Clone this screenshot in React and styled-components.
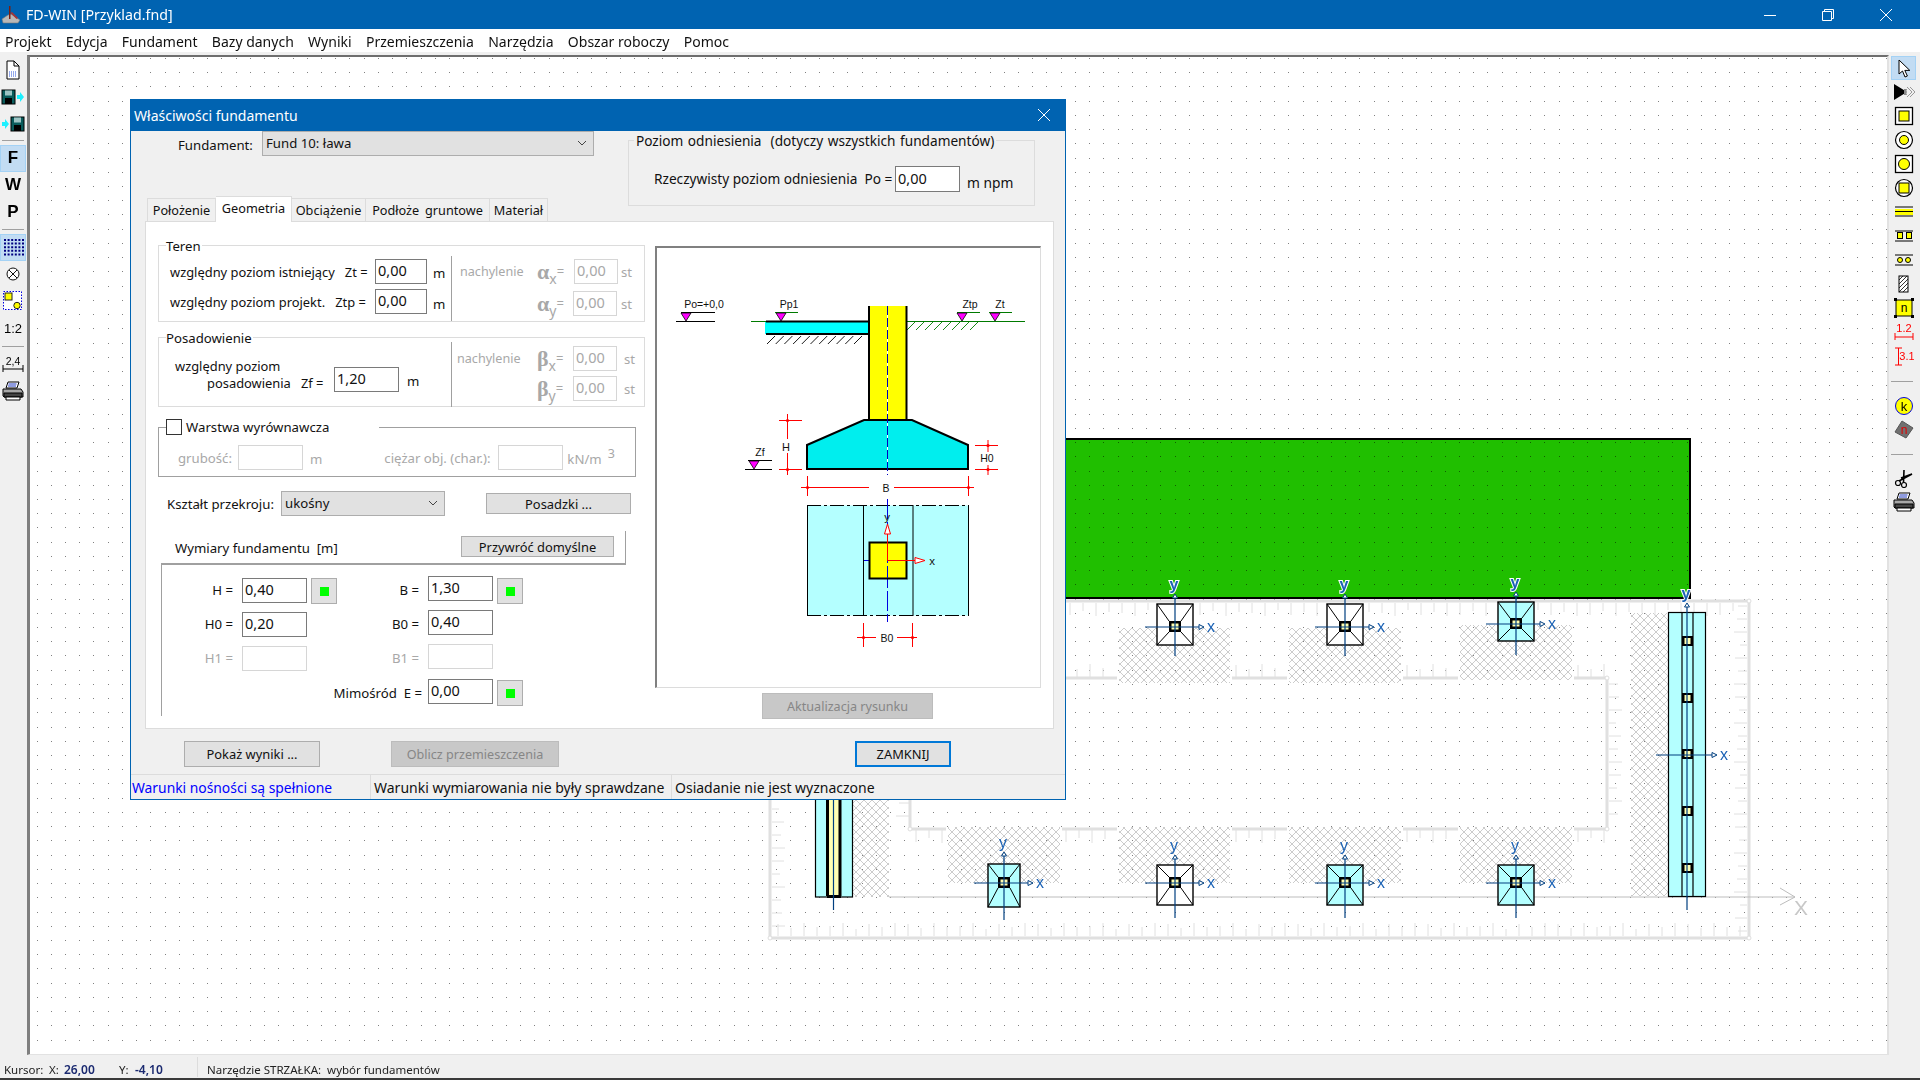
import React from 'react';
import styled, { createGlobalStyle } from 'styled-components';

const UI = '"Noto Sans","Open Sans",sans-serif';
const BLUE = '#0063b1';

const Global = createGlobalStyle`
  html, body { margin: 0; padding: 0; overflow: hidden; background: #f0f0f0; }
  * { box-sizing: border-box; }
`;

const Shell = styled.div`
  position: relative; width: 1920px; height: 1080px; display: flex; flex-direction: column;
  font-family: ${UI}; font-size: 13.2px; color: #111; background: #f0f0f0; overflow: hidden;
`;
const TitleBar = styled.div`
  height: 29px; background: ${BLUE}; color: #fff; display: flex; align-items: center; font-size: 14.2px;
`;
const TitleText = styled.span` margin-left: 4px; flex: 1; `;
const WinButtons = styled.div` display: flex; align-items: center; margin-right: 28px; gap: 46px; `;
const MenuBar = styled.div`
  height: 23px; background: #fff; display: flex; align-items: center; padding: 1px 0 0 5px; gap: 14.3px; font-size: 14px;
`;
const Main = styled.div` flex: 1; display: flex; min-height: 0; `;
const LeftBar = styled.div` width: 27px; padding: 4px 1px 0 0; display: flex; flex-direction: column; align-items: center; `;
const RightBar = styled.div` width: 31px; padding: 4px 0 0 2px; display: flex; flex-direction: column; align-items: flex-start; `;
const ToolBtn = styled.div`
  width: ${p => p.$w}px; height: ${p => p.$h}px; display: flex; align-items: center; justify-content: center;
  flex: none; color: #000; font-family: "Liberation Sans", sans-serif; font-weight: ${p => p.$bold ? 700 : 400}; font-size: ${p => p.$fs || 17}px;
  background: ${p => p.$on ? '#c2dcf3' : 'transparent'};
  box-shadow: ${p => p.$on ? 'inset 0 0 0 1px #a4d2f5' : 'none'};
`;
const ToolSep = styled.div`
  width: 22px; height: ${p => p.$h}px; flex: none; display: flex; align-items: center;
  &::after { content: ''; width: 100%; height: 1px; background: #a0a0a0; }
`;
const CanvasWrap = styled.div` flex: 1; padding-top: 3px; min-width: 0; `;
const Canvas = styled.div`
  height: 100%; border-top: 2px solid #6e6e6e; border-left: 3px solid #7f7f7f; border-right: 2px solid #e2e2e2;
  border-bottom: 1px solid #e2e2e2; background: #fff; overflow: hidden;
`;
const CanvasSvg = styled.svg` display: block; `;
const StatusBar = styled.div`
  height: 25px; flex: none; display: flex; align-items: center; font-size: 11.5px; border-bottom: 2px solid #3a3a3a; padding-top: 5px;
`;
const StatusCell = styled.span`
  width: ${p => p.$w}px; margin-left: ${p => p.$ml || 0}px; flex: none; white-space: pre;
  color: ${p => p.$value ? '#1b2a70' : '#222'}; font-weight: ${p => p.$value ? 600 : 400}; font-size: ${p => p.$value ? 12 : 11.5}px;
`;
const StatusDivider = styled.div` width: 1px; height: 20px; background: #dcdcdc; margin: -4px 9px 0 0; `;

/* dialog */
const Dialog = styled.div`
  position: absolute; left: 130px; top: 99px; width: 936px; height: 701px; border: 1px solid ${BLUE};
  background: #f0f0f0; display: flex; flex-direction: column;
`;
const DialogTitle = styled.div`
  height: 31px; flex: none; background: ${BLUE}; color: #fff; display: flex; align-items: center; justify-content: space-between;
  padding: 0 15px 1px 3px; font-size: 14px;
`;
const TopRow = styled.div` height: 65px; flex: none; display: flex; align-items: flex-start; `;
const FundLabel = styled.span` margin: 3px 0 0 47px; width: 84px; line-height: 22px; `;
const SelectBox = styled.div`
  width: ${p => p.$w}px; height: 25px; flex: none; background: #e1e1e1; border: 1px solid #adadad; display: flex; align-items: center;
  justify-content: space-between; padding: 0 6px 1px 3px;
`;
const RefGroup = styled.div`
  position: relative; margin: 9px 0 0 34px; width: 407px; height: 66px; border: 1px solid #dcdcdc; display: flex; align-items: flex-start;
  padding: 25px 0 0 25px;
`;
const RefLegend = styled.span`
  position: absolute; left: 5px; top: -10px; background: #f0f0f0; padding: 0 2px; white-space: pre; word-spacing: 1px; font-size: 13.65px;
`;
const RefText = styled.span` width: 241px; white-space: pre; line-height: 26px; font-size: 13.65px; `;
const TabRow = styled.div` height: 25px; flex: none; margin-left: 16px; display: flex; align-items: flex-end; position: relative; z-index: 1; `;
const Tab = styled.div`
  width: ${p => p.$w}px; height: ${p => p.$on ? 26 : 24}px; margin-bottom: -1px; border: 1px solid #dcdcdc; border-left: ${p => p.$first ? '1px solid #dcdcdc' : 'none'};
  border-bottom: ${p => p.$on ? 'none' : '1px solid #dcdcdc'}; font-size: 12.7px; word-spacing: 2.5px;
  background: ${p => p.$on ? '#fff' : '#f0f0f0'}; display: flex; align-items: center; justify-content: center; padding-bottom: ${p => p.$on ? 4 : 1}px;
  white-space: nowrap;
`;
const TabPanel = styled.div`
  margin-left: 14px; width: 909px; height: 508px; flex: none; background: #fff; border: 1px solid #dcdcdc; display: flex;
`;
const LeftCol = styled.div` margin: 23px 0 0 12px; width: 487px; flex: none; display: flex; flex-direction: column; `;
const RightCol = styled.div` margin: 24px 0 0 10px; width: 386px; flex: none; display: flex; flex-direction: column; `;
const Group = styled.div`
  position: relative; width: ${p => p.$w}px; height: ${p => p.$h}px; margin-top: ${p => p.$mt || 0}px; flex: none;
  border: 1px solid ${p => p.$dark ? '#a0a0a0' : '#dcdcdc'}; display: flex;
`;
const Legend = styled.span`
  position: absolute; left: 7px; top: -10px; background: #fff; padding-right: 1px; line-height: 20px; display: flex; align-items: center;
`;
const WideLegend = styled(Legend)` width: 213px; top: -11px; `;
const Check = styled.span` width: 16px; height: 16px; border: 1px solid #333; background: #fff; margin-right: 4px; flex: none; `;
const Side = styled.div` width: ${p => p.$w}px; flex: none; padding-top: ${p => p.$pt}px; display: flex; flex-direction: column; `;
const PosSide = styled.div` width: 292px; flex: none; display: flex; `;
const VDivider = styled.div` width: 1px; height: ${p => p.$h}px; background: #a0a0a0; align-self: flex-end; margin-bottom: ${p => p.$mb || 0}px; flex: none; `;
const Row = styled.div` display: flex; align-items: center; height: 25px; margin-top: ${p => p.$mt || 0}px; flex: none; `;
const RowLabel = styled.span` width: ${p => p.$w}px; padding-left: ${p => p.$pl || 0}px; flex: none; white-space: pre; font-size: 12.9px; `;
const Field = styled.input.attrs({ readOnly: true })`
  width: ${p => p.$w}px; height: ${p => p.$h || 25}px; flex: none; background: #fff; border: 1px solid ${p => p.$off ? '#d6d6d6' : '#7a7a7a'}; outline: none;
  padding: 0 0 3px 2px; margin: 0; font-family: inherit; font-size: 14.5px; color: ${p => p.$off ? '#a8a8a8' : '#111'};
`;
const Unit = styled.span`
  margin-left: ${p => p.$ml}px; color: ${p => p.$off ? '#a8a8a8' : '#111'}; white-space: nowrap; padding-top: ${p => p.$pt ?? 3}px;
  font-size: ${p => p.$fs || 13.2}px;
`;
const Muted = styled.span`
  width: ${p => p.$w}px; padding-left: ${p => p.$pl || 0}px; color: #a8a8a8; flex: none; white-space: nowrap;
`;
const NachLabel = styled(Muted)` font-size: 12.6px; `;
const Greek = styled.span`
  width: ${p => p.$w}px; flex: none; color: #a8a8a8; font-family: "Liberation Serif", serif; font-weight: 700; font-size: 22px; line-height: 25px; white-space: nowrap;
  sub { font-family: ${UI}; font-weight: 400; font-size: 14px; line-height: 0; vertical-align: -5px; }
  i { font-style: normal; font-family: ${UI}; font-weight: 400; font-size: 13px; vertical-align: 3px; }
`;
const PosLabel = styled.div` width: 175px; padding: 20px 0 0 16px; line-height: 17px; flex: none; white-space: pre; font-size: 12.9px; `;
const PosLine = styled.div` padding-left: 32px; `;
const PosInput = styled.div` margin-top: 29px; display: flex; align-items: center; flex: none; height: 25px; `;
const SmallSup = styled.span` margin-left: 6px; color: #a8a8a8; font-size: 12.5px; margin-bottom: 8px; `;
const ShapeRow = styled.div` display: flex; align-items: center; margin-top: 14px; height: 25px; padding-left: 9px; flex: none; `;
const ShapeLabel = styled.span` width: 114px; flex: none; white-space: nowrap; `;
const Btn = styled.button`
  width: ${p => p.$w}px; height: ${p => p.$h}px; margin-left: ${p => p.$ml || 0}px; margin-top: ${p => p.$mt || 0}px; flex: none; font-family: inherit; padding: 0;
  font-size: ${p => p.$off ? 12.6 : 12.9}px;
  background: ${p => p.$off ? '#c8c8c8' : '#e1e1e1'}; color: ${p => p.$off ? '#868686' : '#111'};
  border: ${p => p.$focus ? '2px solid #0078d7' : `1px solid ${p.$off ? '#bcbcbc' : '#adadad'}`};
`;
const DimsHead = styled.div`
  margin: 15px 0 0 3px; width: 465px; height: 34px; flex: none; border-bottom: 2px solid #a0a0a0; border-right: 1px solid #a0a0a0;
  display: flex; align-items: flex-start;
`;
const DimsTitle = styled.span` margin: 8px 0 0 14px; width: 286px; flex: none; white-space: pre; `;
const DimsBody = styled.div` margin-left: 3px; height: 151px; flex: none; border-left: 1px solid #a0a0a0; display: flex; `;
const DimCol = styled.div` width: ${p => p.$w}px; padding-top: ${p => p.$pt}px; display: flex; flex-direction: column; gap: 9px; flex: none; `;
const DimRow = styled.div` display: flex; align-items: flex-start; height: 25px; margin-top: ${p => p.$mt || 0}px; `;
const DimLabel = styled.span`
  width: ${p => p.$w}px; margin-right: ${p => p.$mr || 8}px; flex: none; display: flex; justify-content: flex-end; white-space: pre;
  color: ${p => p.$off ? '#a8a8a8' : '#111'}; padding: ${p => p.$pt ?? 4}px 1px 0 0; line-height: 20px;
`;
const GreenBtn = styled.div`
  width: 26px; height: 26px; margin: ${p => p.$mt || 0}px 0 0 4px; flex: none; background: #e1e1e1; border: 1px solid #adadad; display: flex; align-items: center; justify-content: center;
  &::after { content: ''; width: 9px; height: 9px; background: #00ff00; }
`;
const Frame = styled.div`
  width: 386px; height: 442px; flex: none; border-top: 2px solid #808080; border-left: 2px solid #808080; border-right: 1px solid #dcdcdc; border-bottom: 1px solid #dcdcdc; background: #fff;
`;
const DrawSvg = styled.svg` display: block; `;
const Footer = styled.div` height: 45px; flex: none; padding: 12px 0 0 53px; display: flex; align-items: flex-start; `;
const DlgStatus = styled.div` flex: 1; border-top: 1px solid #dcdcdc; display: flex; align-items: center; font-size: 14px; `;
const DlgCell = styled.span`
  width: ${p => p.$w}px; height: 100%; display: flex; align-items: center; flex: none; padding-left: ${p => p.$pl}px; white-space: nowrap;
  border-left: ${p => p.$line ? '1px solid #dcdcdc' : 'none'}; color: ${p => p.$blue ? '#0000ff' : '#111'}; font-size: ${p => p.$blue ? 13.85 : 14}px;
`;

const Chevron = () => (
  <svg width="10" height="6" viewBox="0 0 10 6"><path d="M1 1l4 4 4-4" fill="none" stroke="#444" strokeWidth="1" /></svg>
);

/* ---------- toolbar icons ---------- */
const I = ({ children, w = 24, h = 24 }) => <svg width={w} height={h} viewBox={`0 0 ${w} ${h}`} shapeRendering="geometricPrecision">{children}</svg>;
const Printer = () => (
  <I w={22} h={20}>
    <path d="M6 1h11l-2 6H4z" fill="#fff" stroke="#000" />
    <path d="M6.5 3h8M6 5h8" stroke="#2038c0" />
    <path d="M1 8h18l2 3v5H2l-1-1z" fill="#a8a8a8" stroke="#000" />
    <path d="M2 12h18v4H2z" fill="#444" stroke="#000" />
    <path d="M4 16h14v3H4z" fill="#fff" stroke="#000" />
  </I>
);
const SaveIcon = ({ arrowRight }) => (
  <I w={24} h={18}>
    <g transform={arrowRight ? 'translate(0,0)' : 'translate(9,0)'}>
      <rect x="1" y="2" width="13" height="14" fill="#0a5c5c" stroke="#000" />
      <rect x="4" y="2.5" width="7" height="5" fill="#9dc4c4" />
      <rect x="4" y="10" width="7" height="6" fill="#000" />
    </g>
    <path d={arrowRight ? 'M16 7h3V4l4 5-4 5v-3h-3z' : 'M1 7h3V4l4 5-4 5v-3H1z'} fill="#1cf0ff" />
  </I>
);
const DocIcon = () => (
  <I w={18} h={20}>
    <path d="M3 1h7l5 5v13H3z" fill="#fff" stroke="#000" />
    <path d="M10 1v5h5" fill="none" stroke="#000" />
    <path d="M5 12h8M5 14h8M5 16h8" stroke="#2a55d8" strokeDasharray="1 1" />
  </I>
);
const GridIcon = () => {
  const d = [];
  for (let r = 0; r < 5; r++) for (let c = 0; c < 6; c++) d.push(`M${3 + c * 3.6} ${3 + r * 3.6}h2v2h-2z`);
  return <I w={25} h={22}><path d={d.join('')} fill="#000080" /></I>;
};
const CrossCircle = () => (
  <I w={16} h={16}>
    <circle cx="8" cy="8" r="6" fill="#fff" stroke="#111" />
    <path d="M4 4l8 8M12 4l-8 8" stroke="#111" />
  </I>
);
const ShapesIcon = () => (
  <I w={22} h={22}>
    <rect x="1.5" y="1.5" width="18" height="18" fill="#fff" stroke="#0000e0" strokeDasharray="1.5 1.5" />
    <rect x="3" y="3" width="7" height="7" fill="#ffff00" stroke="#222" />
    <circle cx="15" cy="15.5" r="3.2" fill="#ffff00" stroke="#222" />
  </I>
);
const DimIcon = () => (
  <I w={22} h={20}>
    <text x="11" y="11" textAnchor="middle" fontFamily="Liberation Sans" fontSize="10.5" fill="#000">2,4</text>
    <path d="M1 11v7M1 15h20M21 11v7" stroke="#000" fill="none" />
  </I>
);
const Arrow = () => (
  <I w={16} h={20}><path d="M3 2v14l3.5-3 2.5 6 2.4-1-2.6-5.6h5z" fill="#fff" stroke="#000" /></I>
);
const DblArrow = () => (
  <I w={22} h={18}>
    <path d="M1 1l13 8-13 8z" fill="#000" />
    <path d="M11 6h3l-1 3 1 3h-3z" fill="#888" />
    <path d="M14 4l5 5-5 5M17 4l5 5-5 5" fill="none" stroke="#999" />
  </I>
);
const SqIcon = ({ outer, inner }) => (
  <I w={20} h={20}>
    {outer === 'sq' ? <rect x="1.5" y="1.5" width="17" height="17" fill="#fff" stroke="#000" strokeWidth="1.3" /> : <circle cx="10" cy="10" r="8.5" fill="#fff" stroke="#000" strokeWidth="1.2" />}
    {inner === 'sq' ? <rect x="5" y="5" width="10" height="10" fill="#ffff00" stroke="#000" /> : <circle cx="10" cy="10" r={outer === 'sq' ? 5.5 : 4.5} fill="#ffff00" stroke="#000" />}
  </I>
);
const BandIcon = () => (
  <I w={20} h={14}><path d="M1 2h18" stroke="#000" /><rect x="1" y="4" width="18" height="6" fill="#ffff00" /><path d="M1 6.5h18M1 11h18" stroke="#000" /></I>
);
const TwinSq = () => (
  <I w={20} h={14}>
    <path d="M1 2h18M1 12h18" stroke="#000" />
    <rect x="3.5" y="3.5" width="5" height="6" fill="#ffff00" stroke="#000" /><rect x="12.5" y="3.5" width="5" height="6" fill="#ffff00" stroke="#000" />
  </I>
);
const TwinCirc = () => (
  <I w={20} h={14}>
    <path d="M1 2h18M1 12h18" stroke="#000" />
    <circle cx="6" cy="7" r="2.5" fill="#ffff00" stroke="#000" /><circle cx="14" cy="7" r="2.5" fill="#ffff00" stroke="#000" />
  </I>
);
const HatchIcon = () => (
  <I w={12} h={18}>
    <rect x="1" y="1" width="9" height="16" fill="#fff" stroke="#000" />
    <path d="M1 5l4-4M1 9l8-8M1 13l9-9M1 17l9-9M5 17l5-5" stroke="#000" strokeWidth=".8" />
  </I>
);
const NIcon = () => (
  <I w={20} h={20}>
    <rect x="2" y="2" width="16" height="16" fill="#ffff00" stroke="#000" />
    <path d="M0 0h3v3H0zM17 0h3v3h-3zM0 17h3v3H0zM17 17h3v3h-3z" fill="#000" />
    <text x="10" y="14" textAnchor="middle" fontFamily="Liberation Sans" fontSize="12" fill="#000">n</text>
  </I>
);
const Dim12 = () => (
  <I w={20} h={20}>
    <text x="10" y="10" textAnchor="middle" fontFamily="Liberation Sans" fontSize="11" fill="#f00">1.2</text>
    <path d="M1 11v7M1 15h18M19 11v7" stroke="#f00" fill="none" />
  </I>
);
const Dim31 = () => (
  <I w={20} h={20}>
    <path d="M1 2h7M4.5 2v17M1 19h7" stroke="#f00" fill="none" />
    <text x="13" y="14" textAnchor="middle" fontFamily="Liberation Sans" fontSize="11" fill="#f00">3.1</text>
  </I>
);
const KIcon = () => (
  <I w={20} h={20}>
    <circle cx="10" cy="10" r="8.5" fill="#ffff00" stroke="#0000e0" />
    <text x="10" y="14.5" textAnchor="middle" fontFamily="Liberation Sans" fontSize="13" fill="#000">k</text>
  </I>
);
const Diamond = () => (
  <I w={20} h={20}>
    <path d="M8 1l11 7-7 10-11-6z" fill="#707070" stroke="#555" />
    <text x="10" y="14" textAnchor="middle" fontFamily="Liberation Sans" fontSize="12" fill="#e00000">n</text>
  </I>
);
const ScissorsIcon = () => (
  <I w={20} h={20}>
    <circle cx="4" cy="15" r="2.5" fill="none" stroke="#000" strokeWidth="1.2" />
    <circle cx="10" cy="17" r="2.5" fill="none" stroke="#000" strokeWidth="1.2" />
    <path d="M5 13L18 6 7 10M9.5 14.5L10 2" fill="none" stroke="#000" strokeWidth="1.6" />
  </I>
);

/* ---------- plan drawing ---------- */
const SPACING = 14.225;
const dotsPath = (() => {
  const out = [];
  for (let yi = 0; yi < 72; yi++) {
    const y = Math.round(58 + yi * SPACING);
    for (let xi = 0; xi < 132; xi++) {
      const x = Math.round(36.5 + xi * SPACING);
      out.push(`M${x} ${y}h1v1h-1z`);
    }
  }
  return out.join('');
})();

const LENS = [12, 8, 13, 9, 10, 13, 7, 12, 9, 13];
const hTicks = (x0, x1, y, dir) => {
  let s = '';
  let i = 0;
  for (let x = x0; x <= x1; x += 13) s += `M${x} ${y}v${dir * LENS[i++ % LENS.length]}`;
  return s;
};
const vTicks = (y0, y1, x, dir) => {
  let s = '';
  let i = 3;
  for (let y = y0; y <= y1; y += 13) s += `M${x} ${y}h${dir * LENS[i++ % LENS.length]}`;
  return s;
};
const TOP_SEGS = [[1060, 1117], [1232, 1287], [1403, 1458], [1574, 1607]];
const BOT_SEGS = [[912, 946], [1062, 1117], [1232, 1287], [1403, 1458], [1574, 1607]];
const segLines = (segs, y) => segs.map(([a, b]) => `M${a} ${y}H${b}`).join('');
const segTicks = (segs, y, dir) => segs.map(([a, b]) => hTicks(a + 4, b - 2, y, dir)).join('');
const AX = '#003f80';
const LBL = '#1b62b5';

const AxisLabel = ({ x, y, halo, children }) => (
  <text x={x} y={y} textAnchor="middle" fontFamily="Liberation Sans" fontSize="16" fill={LBL}
    stroke={halo ? '#fff' : 'none'} strokeWidth={halo ? 2 : 0} paintOrder="stroke" fontWeight={halo ? 700 : 400}>{children}</text>
);
const Axes = ({ cx, cy, top, bot, left = 30, right = 24, halo }) => (
  <g>
    <path d={`M${cx} ${top + 4}V${bot}M${cx - left} ${cy}H${cx + right}`} stroke={AX} strokeWidth="1.2" fill="none" />
    <path d={`M${cx} ${top}l-2.5 4h5zM${cx + right + 5} ${cy}l-5 -2.5v5z`} fill="#fff" stroke={AX} />
    <AxisLabel x={cx - 1} y={top - 4} halo={halo}>y</AxisLabel>
    <AxisLabel x={cx + right + 12} y={cy + 5}>x</AxisLabel>
  </g>
);
const ColMark = ({ cx, cy }) => (
  <g>
    <rect x={cx - 6} y={cy - 6} width="12" height="11" fill="#000" />
    <rect x={cx - 3.5} y={cy - 3.5} width="7" height="6" fill="#ffffb4" />
  </g>
);
const Pier = ({ cx, cy, y0, y1, w = 18, fill, top, bot, halo }) => {
  const x0 = cx - w, x1 = cx + w;
  return (
    <g>
      <rect x={x0} y={y0} width={x1 - x0} height={y1 - y0} fill={fill} stroke="#000" strokeWidth="1.4" />
      <path d={`M${x0} ${y0}L${cx - 6} ${cy - 6}M${x1} ${y0}L${cx + 6} ${cy - 6}M${x0} ${y1}L${cx - 6} ${cy + 5}M${x1} ${y1}L${cx + 6} ${cy + 5}`} stroke="#000" fill="none" />
      <ColMark cx={cx} cy={cy} />
      <Axes cx={cx} cy={cy} top={top} bot={bot} halo={halo} />
    </g>
  );
};

const Plan = () => (
  <CanvasSvg width="1857" height="997" viewBox="30 57 1857 997">
    <defs>
      <pattern id="xh" width="8" height="8" patternUnits="userSpaceOnUse">
        <path d="M0 0L8 8M8 0L0 8" stroke="#c6c6c6" strokeWidth=".9" fill="none" />
      </pattern>
    </defs>
    <rect x="700" y="439" width="990" height="159" fill="#20bf00" stroke="#000" strokeWidth="2" />
    <path d={dotsPath} fill="#808080" style={{ mixBlendMode: 'multiply' }} />
    <g fill="url(#xh)">
      <rect x="1119" y="628" width="111" height="55" />
      <rect x="1289" y="628" width="112" height="55" />
      <rect x="1460" y="625" width="112" height="55" />
      <rect x="948" y="827" width="112" height="56" />
      <rect x="1119" y="827" width="111" height="56" />
      <rect x="1289" y="827" width="112" height="56" />
      <rect x="1460" y="827" width="112" height="56" />
      <rect x="1631" y="613" width="37" height="283" />
      <rect x="853" y="700" width="36" height="197" />
    </g>
    <g fill="none" stroke="#e0e0e0">
      <path d="M770 601H1749V938H770Z" strokeWidth="3" />
      <path d={`${segLines(TOP_SEGS, 678)}M1607 678V829${segLines(BOT_SEGS, 829)}M910 780V829`} strokeWidth="3" />
      <path d={hTicks(1070, 1745, 603, 1)} />
      <path d={hTicks(778, 1745, 936, -1)} />
      <path d={vTicks(606, 932, 1747, -1)} />
      <path d={vTicks(770, 932, 772, 1)} />
      <path d={segTicks(TOP_SEGS, 677, -1)} />
      <path d={segTicks(BOT_SEGS, 830, 1)} />
      <path d={vTicks(684, 826, 1609, 1)} />
      <path d={vTicks(790, 826, 909, -1)} />
    </g>
    <g fill="#fff" stroke="#dedede">
      <circle cx="1749" cy="601" r="2" /><circle cx="1749" cy="938" r="2" />
      <circle cx="1607" cy="678" r="2" /><circle cx="1607" cy="829" r="2" />
      <circle cx="770" cy="938" r="2" /><circle cx="910" cy="829" r="2" />
    </g>
    <path d="M889 897H1795M1780 888L1795 897L1780 905" stroke="#bdbdbd" strokeWidth="1" fill="none" />
    <text x="1801" y="915" textAnchor="middle" fontFamily="Liberation Sans" fontSize="21" fill="#c8c8c8">X</text>

    <Pier cx={1175} cy={627} y0={604} y1={645} fill="#fff" top={594} bot={656} halo />
    <Pier cx={1345} cy={627} y0={604} y1={645} fill="#fff" top={594} bot={656} halo />
    <Pier cx={1516} cy={624} y0={602} y1={641} fill="#b4ffff" top={592} bot={655} halo />
    <Pier cx={1004} cy={883} y0={864} y1={907} w={16} fill="#b4ffff" top={852} bot={920} />
    <Pier cx={1175} cy={883} y0={865} y1={905} fill="#fff" top={855} bot={918} />
    <Pier cx={1345} cy={883} y0={865} y1={905} fill="#b4ffff" top={855} bot={918} />
    <Pier cx={1516} cy={883} y0={865} y1={905} fill="#b4ffff" top={855} bot={918} />

    <rect x="1668.5" y="612.5" width="37" height="284" fill="#b4ffff" stroke="#000" strokeWidth="1.2" />
    <path d="M1682 612V897M1693 612V897" stroke="#000" strokeWidth="1.2" />
    {[641, 698, 754, 811, 868].map(y => (
      <g key={y}>
        <rect x="1682" y={y - 5} width="11" height="10" fill="#000" />
        <rect x="1684.5" y={y - 3} width="6" height="6" fill="#ffffb4" />
      </g>
    ))}
    <Axes cx={1687} cy={755} top={603} bot={910} left={31} right={25} halo />

    <rect x="815.5" y="700" width="37" height="197" fill="#b4ffff" stroke="#000" strokeWidth="1.2" />
    <rect x="828" y="700" width="12" height="196" fill="#ffffb4" />
    <path d="M827.5 700V896M840 700V896M827 896.5H841" stroke="#000" strokeWidth="3" fill="none" />
    <path d="M833.5 700V910" stroke={AX} strokeWidth="1.2" />
  </CanvasSvg>
);

/* ---------- section drawing in dialog ---------- */
const Tri = ({ x, y }) => <path d={`M${x - 5} ${y}h10l-5 8z`} fill="#ff00ff" stroke="#000" strokeWidth=".8" />;
const DT = ({ x, y, anchor = 'middle', children, fs = 10.5, fill = '#111' }) => (
  <text x={x} y={y} textAnchor={anchor} fontFamily="Liberation Sans" fontSize={fs} fill={fill}>{children}</text>
);
const Dot = ({ x, y }) => <circle cx={x} cy={y} r="1.6" fill="#f00" />;

const range = (a, b, s) => { const r = []; for (let i = a; i <= b; i += s) r.push(i); return r; };

const Section = () => (
  <DrawSvg width="384" height="439" viewBox="657 248 384 439">
    <DT x={704} y={308}>Po=+0,0</DT>
    <path d="M681 312.5h34M676 321.5h39" stroke="#000" />
    <Tri x={686} y={313} />

    <path d="M751 321.5H1025" stroke="#007a00" />
    <rect x="765" y="322" width="103" height="12" fill="#00ffff" />
    <path d="M766 321.5H868M766 334H868" stroke="#000" strokeWidth="2" />
    <path d={range(767, 860, 8.7).map(x => `M${x} 344l8 -8`).join('')} stroke="#000" fill="none" strokeWidth=".9" />
    <DT x={789} y={308}>Pp1</DT>
    <path d="M775 312.5h23" stroke="#007a00" />
    <Tri x={781} y={313} />

    <path d={range(907, 975, 9).map(x => `M${x} 330l8 -8`).join('')} stroke="#007a00" fill="none" strokeWidth=".9" />
    <DT x={970} y={308}>Ztp</DT>
    <path d="M957 312.5h23M989 312.5h23" stroke="#007a00" />
    <Tri x={962} y={313} />
    <DT x={1000} y={308}>Zt</DT>
    <Tri x={995} y={313} />

    <rect x="869" y="306" width="37" height="115" fill="#ffff00" />
    <path d="M869 306V420M906.5 306V420" stroke="#000" strokeWidth="2" />

    <path d="M807 445L864 420H912L968 445V469H807Z" fill="#00eeee" stroke="#000" strokeWidth="2" strokeLinejoin="miter" />
    <path d="M887.5 306V475" stroke="#fff" />
    <path d="M887.5 306V475" stroke="#0000c0" strokeDasharray="9 3" />

    <path d="M787.5 414V475M779 420.5H802M779 469.5H802" stroke="#f00" fill="none" />
    <Dot x={787.5} y={420.5} /><Dot x={787.5} y={469.5} />
    <rect x="781" y="439" width="13" height="14" fill="#fff" />
    <DT x={786} y={451} fs={11}>H</DT>
    <path d="M988 440V475M975 445.5H998M975 469.5H998" stroke="#f00" fill="none" />
    <Dot x={988} y={445.5} /><Dot x={988} y={469.5} />
    <rect x="980" y="452" width="16" height="13" fill="#fff" />
    <DT x={987} y={462} fs={10.5}>H0</DT>

    <DT x={760} y={456}>Zf</DT>
    <path d="M748 460.5h24M745 469.5h27" stroke="#000" />
    <Tri x={754} y={461} />

    <path d="M807.5 476V496M968.5 476V496M801 487.5H869M894 487.5H974" stroke="#f00" fill="none" />
    <Dot x={807.5} y={487.5} /><Dot x={968.5} y={487.5} />
    <DT x={886} y={492}>B</DT>

    <rect x="807.5" y="505.5" width="161" height="110" fill="#b4ffff" />
    <path d="M807.5 505V616M968.5 505V616M863.5 505V616M913 505V616" stroke="#000" fill="none" />
    <path d="M807 505.5H968M807 615.5H968" stroke="#000" strokeDasharray="14 3 3 3" fill="none" />
    <path d="M887.5 499V622M864 560.5H881" stroke="#0000e0" strokeDasharray="20 3" fill="none" />
    <rect x="869.5" y="542.5" width="37" height="36" fill="#ffff00" stroke="#000" strokeWidth="2" />
    <path d="M887.5 543V578" stroke="#0000e0" strokeDasharray="20 3" />
    <path d="M887.5 560.5H915M887.5 560.5V534" stroke="#f00" fill="none" />
    <path d="M915 557.5l10 3-10 3zM887.5 524l3 10h-6z" fill="#fff" stroke="#f00" />
    <DT x={932} y={565} fs={11.5}>x</DT>
    <DT x={887} y={521} fs={11.5}>y</DT>

    <path d="M863.5 623V647M912.5 623V647M857 637.5H876M897 637.5H917" stroke="#f00" fill="none" />
    <Dot x={863.5} y={637.5} /><Dot x={912.5} y={637.5} />
    <DT x={887} y={642}>B0</DT>
  </DrawSvg>
);

const MENU = ['Projekt', 'Edycja', 'Fundament', 'Bazy danych', 'Wyniki', 'Przemieszczenia', 'Narzędzia', 'Obszar roboczy', 'Pomoc'];

export default function App() {
  return (
    <Shell>
      <Global />
      <TitleBar>
        <svg width="22" height="22" viewBox="0 0 22 22">
          <path d="M2 15l6-4 3-1 9 6-2 3H3z" fill="#b8b8b8" stroke="#777" strokeWidth=".6" />
          <path d="M9 2h1.5v13H9z" fill="#7a1f10" />
          <path d="M12 8l6 6-1.5 1-6-6z" fill="#a33" />
        </svg>
        <TitleText>FD-WIN [Przyklad.fnd]</TitleText>
        <WinButtons>
          <svg width="12" height="12" viewBox="0 0 12 12"><path d="M0 6.5h12" stroke="#fff" /></svg>
          <svg width="12" height="12" viewBox="0 0 12 12"><path d="M.5 2.5h9v9h-9zM2.5 2.5v-2h9v9h-2" fill="none" stroke="#fff" /></svg>
          <svg width="12" height="12" viewBox="0 0 12 12"><path d="M0 0l12 12M12 0L0 12" stroke="#fff" /></svg>
        </WinButtons>
      </TitleBar>
      <MenuBar>{MENU.map(m => <span key={m}>{m}</span>)}</MenuBar>
      <Main>
        <LeftBar>
          <ToolBtn $w={26} $h={27}><DocIcon /></ToolBtn>
          <ToolBtn $w={26} $h={27}><SaveIcon arrowRight /></ToolBtn>
          <ToolBtn $w={26} $h={27}><SaveIcon /></ToolBtn>
          <ToolSep $h={7.5} />
          <ToolBtn $w={26} $h={27} $on $bold>F</ToolBtn>
          <ToolBtn $w={26} $h={27} $bold>W</ToolBtn>
          <ToolBtn $w={26} $h={27} $bold>P</ToolBtn>
          <ToolSep $h={8} />
          <ToolBtn $w={26} $h={27} $on><GridIcon /></ToolBtn>
          <ToolBtn $w={26} $h={27}><CrossCircle /></ToolBtn>
          <ToolBtn $w={26} $h={27}><ShapesIcon /></ToolBtn>
          <ToolBtn $w={26} $h={27} $fs={13}>1:2</ToolBtn>
          <ToolSep $h={9} />
          <ToolBtn $w={26} $h={27}><DimIcon /></ToolBtn>
          <ToolBtn $w={26} $h={27}><Printer /></ToolBtn>
        </LeftBar>
        <CanvasWrap>
          <Canvas><Plan /></Canvas>
        </CanvasWrap>
        <RightBar>
          <ToolBtn $w={25} $h={24} $on><Arrow /></ToolBtn>
          <ToolBtn $w={25} $h={24}><DblArrow /></ToolBtn>
          <ToolBtn $w={25} $h={24}><SqIcon outer="sq" inner="sq" /></ToolBtn>
          <ToolBtn $w={25} $h={24}><SqIcon outer="c" inner="c" /></ToolBtn>
          <ToolBtn $w={25} $h={24}><SqIcon outer="sq" inner="c" /></ToolBtn>
          <ToolBtn $w={25} $h={24}><SqIcon outer="c" inner="sq" /></ToolBtn>
          <ToolBtn $w={25} $h={24}><BandIcon /></ToolBtn>
          <ToolBtn $w={25} $h={24}><TwinSq /></ToolBtn>
          <ToolBtn $w={25} $h={24}><TwinCirc /></ToolBtn>
          <ToolBtn $w={25} $h={24}><HatchIcon /></ToolBtn>
          <ToolBtn $w={25} $h={24}><NIcon /></ToolBtn>
          <ToolBtn $w={25} $h={24}><Dim12 /></ToolBtn>
          <ToolBtn $w={25} $h={24}><Dim31 /></ToolBtn>
          <ToolSep $h={26} />
          <ToolBtn $w={25} $h={24}><KIcon /></ToolBtn>
          <ToolBtn $w={25} $h={24}><Diamond /></ToolBtn>
          <ToolSep $h={24} />
          <ToolBtn $w={25} $h={24}><ScissorsIcon /></ToolBtn>
          <ToolBtn $w={25} $h={24}><Printer /></ToolBtn>
        </RightBar>
      </Main>
      <StatusBar>
        <StatusCell $w={45} $ml={4}>Kursor:</StatusCell>
        <StatusCell $w={15}>X:</StatusCell>
        <StatusCell $w={55} $value>26,00</StatusCell>
        <StatusCell $w={16}>Y:</StatusCell>
        <StatusCell $w={62} $value>-4,10</StatusCell>
        <StatusDivider />
        <StatusCell $w={300}>Narzędzie STRZAŁKA:  wybór fundamentów</StatusCell>
      </StatusBar>

      <Dialog>
        <DialogTitle>
          <span>Właściwości fundamentu</span>
          <svg width="12" height="12" viewBox="0 0 12 12"><path d="M0 0l12 12M12 0L0 12" stroke="#fff" strokeWidth="1" /></svg>
        </DialogTitle>
        <TopRow>
          <FundLabel>Fundament:</FundLabel>
          <SelectBox $w={332}><span>Fund 10: ława</span><Chevron /></SelectBox>
          <RefGroup>
            <RefLegend>Poziom odniesienia  (dotyczy wszystkich fundamentów)</RefLegend>
            <RefText>Rzeczywisty poziom odniesienia  Po =</RefText>
            <Field $w={65} $h={26} defaultValue="0,00" />
            <Unit $ml={7} $pt={7} $fs={13.8}>m npm</Unit>
          </RefGroup>
        </TopRow>
        <TabRow>
          <Tab $w={69} $first>Położenie</Tab>
          <Tab $w={76} $on>Geometria</Tab>
          <Tab $w={74}>Obciążenie</Tab>
          <Tab $w={124}>Podłoże gruntowe</Tab>
          <Tab $w={58}>Materiał</Tab>
        </TabRow>
        <TabPanel>
          <LeftCol>
            <Group $w={487} $h={77}>
              <Legend>Teren</Legend>
              <Side $w={292} $pt={13}>
                <Row>
                  <RowLabel $w={216} $pl={11}>względny poziom istniejący   Zt =</RowLabel>
                  <Field $w={52} defaultValue="0,00" />
                  <Unit $ml={6}>m</Unit>
                </Row>
                <Row $mt={5}>
                  <RowLabel $w={216} $pl={11}>względny poziom projekt.   Ztp =</RowLabel>
                  <Field $w={52} defaultValue="0,00" />
                  <Unit $ml={6} $pt={5}>m</Unit>
                </Row>
              </Side>
              <VDivider $h={65} />
              <Side $w={190} $pt={13}>
                <Row>
                  <NachLabel $w={85} $pl={8}>nachylenie</NachLabel>
                  <Greek $w={37}>α<sub>x</sub><i>=</i></Greek>
                  <Field $w={44} $off defaultValue="0,00" />
                  <Unit $ml={3} $off $pt={0}>st</Unit>
                </Row>
                <Row $mt={7}>
                  <Muted $w={85} />
                  <Greek $w={36}>α<sub>y</sub><i>=</i></Greek>
                  <Field $w={44} $off defaultValue="0,00" />
                  <Unit $ml={4} $off $pt={0}>st</Unit>
                </Row>
              </Side>
            </Group>
            <Group $w={487} $h={70} $mt={15}>
              <Legend>Posadowienie</Legend>
              <PosSide>
                <PosLabel>
                  względny poziom
                  <PosLine>posadowienia   Zf =</PosLine>
                </PosLabel>
                <PosInput>
                  <Field $w={65} defaultValue="1,20" />
                  <Unit $ml={8}>m</Unit>
                </PosInput>
              </PosSide>
              <VDivider $h={65} $mb={-1} />
              <Side $w={190} $pt={8}>
                <Row>
                  <NachLabel $w={85} $pl={5}>nachylenie</NachLabel>
                  <Greek $w={36}>β<sub>x</sub><i>=</i></Greek>
                  <Field $w={44} $off defaultValue="0,00" />
                  <Unit $ml={7} $off $pt={0}>st</Unit>
                </Row>
                <Row $mt={5}>
                  <Muted $w={85} />
                  <Greek $w={36}>β<sub>y</sub><i>=</i></Greek>
                  <Field $w={44} $off defaultValue="0,00" />
                  <Unit $ml={7} $off $pt={0}>st</Unit>
                </Row>
              </Side>
            </Group>
            <Group $w={478} $h={50} $mt={20} $dark>
              <WideLegend><Check />Warstwa wyrównawcza</WideLegend>
              <Side $w={476} $pt={17}>
                <Row>
                  <Muted $w={79} $pl={19}>grubość:</Muted>
                  <Field $w={65} $off />
                  <Unit $ml={7} $off>m</Unit>
                  <Muted $w={114} style={{ marginLeft: 62 }}>ciężar obj. (char.):</Muted>
                  <Field $w={65} $off />
                  <Unit $ml={4} $off>kN/m</Unit>
                  <SmallSup>3</SmallSup>
                </Row>
              </Side>
            </Group>
            <ShapeRow>
              <ShapeLabel>Kształt przekroju:</ShapeLabel>
              <SelectBox $w={164}><span>ukośny</span><Chevron /></SelectBox>
              <Btn $w={145} $h={21} $ml={41}>Posadzki ...</Btn>
            </ShapeRow>
            <DimsHead>
              <DimsTitle>Wymiary fundamentu  [m]</DimsTitle>
              <Btn $w={153} $h={21} $mt={5}>Przywróć domyślne</Btn>
            </DimsHead>
            <DimsBody>
              <DimCol $w={168} $pt={13}>
                <DimRow>
                  <DimLabel $w={72} $pt={2}>H =</DimLabel>
                  <Field $w={65} defaultValue="0,40" />
                  <GreenBtn />
                </DimRow>
                <DimRow>
                  <DimLabel $w={72} $pt={2}>H0 =</DimLabel>
                  <Field $w={65} defaultValue="0,20" />
                </DimRow>
                <DimRow>
                  <DimLabel $w={72} $pt={2} $off>H1 =</DimLabel>
                  <Field $w={65} $off />
                </DimRow>
              </DimCol>
              <DimCol $w={190} $pt={11}>
                <DimRow>
                  <DimLabel $w={90}>B =</DimLabel>
                  <Field $w={65} defaultValue="1,30" />
                  <GreenBtn $mt={2} />
                </DimRow>
                <DimRow>
                  <DimLabel $w={90}>B0 =</DimLabel>
                  <Field $w={65} defaultValue="0,40" />
                </DimRow>
                <DimRow>
                  <DimLabel $w={90} $off>B1 =</DimLabel>
                  <Field $w={65} $off />
                </DimRow>
                <DimRow $mt={1}>
                  <DimLabel $w={93} $mr={5}>Mimośród  E =</DimLabel>
                  <Field $w={65} defaultValue="0,00" />
                  <GreenBtn $mt={1} />
                </DimRow>
              </DimCol>
            </DimsBody>
          </LeftCol>
          <RightCol>
            <Frame><Section /></Frame>
            <Btn $w={171} $h={26} $ml={107} $mt={5} $off>Aktualizacja rysunku</Btn>
          </RightCol>
        </TabPanel>
        <Footer>
          <Btn $w={136} $h={26}>Pokaż wyniki ...</Btn>
          <Btn $w={168} $h={26} $ml={71} $off>Oblicz przemieszczenia</Btn>
          <Btn $w={96} $h={26} $ml={296} $focus>ZAMKNIJ</Btn>
        </Footer>
        <DlgStatus>
          <DlgCell $w={239} $pl={1} $blue>Warunki nośności są spełnione</DlgCell>
          <DlgCell $w={301} $pl={3} $line>Warunki wymiarowania nie były sprawdzane</DlgCell>
          <DlgCell $w={300} $pl={3} $line>Osiadanie nie jest wyznaczone</DlgCell>
        </DlgStatus>
      </Dialog>
    </Shell>
  );
}
